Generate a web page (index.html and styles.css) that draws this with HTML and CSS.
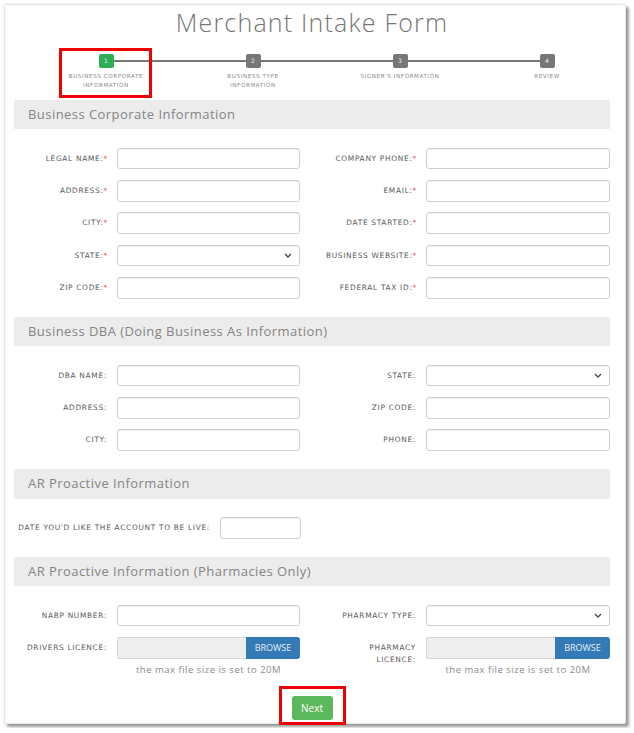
FILE: index.html
```html
<!DOCTYPE html>
<html lang="en">
<head>
<meta charset="utf-8">
<title>Merchant Intake Form</title>
<link rel="stylesheet" href="styles.css">
</head>
<body>
<div class="card">
  <h1 class="title">Merchant Intake Form</h1>

  <div class="stepper">
    <div class="step active"><span class="num">1</span><span class="step-label">BUSINESS CORPORATE<br>INFORMATION</span></div>
    <div class="step"><span class="num">2</span><span class="step-label">BUSINESS TYPE<br>INFORMATION</span></div>
    <div class="step"><span class="num">3</span><span class="step-label">SIGNER'S INFORMATION</span></div>
    <div class="step last"><span class="num">4</span><span class="step-label">REVIEW</span></div>
  </div>

  <section class="section">
    <h2 class="bar">Business Corporate Information</h2>
    <div class="grid">
      <label class="lbl">LEGAL NAME:<span class="req">*</span></label><input class="inp" type="text">
      <label class="lbl">COMPANY PHONE:<span class="req">*</span></label><input class="inp" type="text">
      <label class="lbl">ADDRESS:<span class="req">*</span></label><input class="inp" type="text">
      <label class="lbl">EMAIL:<span class="req">*</span></label><input class="inp" type="text">
      <label class="lbl">CITY:<span class="req">*</span></label><input class="inp" type="text">
      <label class="lbl">DATE STARTED:<span class="req">*</span></label><input class="inp" type="text">
      <label class="lbl">STATE:<span class="req">*</span></label>
      <div class="sel-wrap"><select class="inp sel"><option></option></select><svg class="chev" viewBox="0 0 8 5" width="8" height="5"><path d="M1 1l3 3 3-3" fill="none" stroke="#444" stroke-width="1.3"/></svg></div>
      <label class="lbl">BUSINESS WEBSITE:<span class="req">*</span></label><input class="inp" type="text">
      <label class="lbl">ZIP CODE:<span class="req">*</span></label><input class="inp" type="text">
      <label class="lbl">FEDERAL TAX ID:<span class="req">*</span></label><input class="inp" type="text">
    </div>
  </section>

  <section class="section">
    <h2 class="bar">Business DBA (Doing Business As Information)</h2>
    <div class="grid">
      <label class="lbl">DBA NAME:</label><input class="inp" type="text">
      <label class="lbl">STATE:</label>
      <div class="sel-wrap"><select class="inp sel"><option></option></select><svg class="chev" viewBox="0 0 8 5" width="8" height="5"><path d="M1 1l3 3 3-3" fill="none" stroke="#444" stroke-width="1.3"/></svg></div>
      <label class="lbl">ADDRESS:</label><input class="inp" type="text">
      <label class="lbl">ZIP CODE:</label><input class="inp" type="text">
      <label class="lbl">CITY:</label><input class="inp" type="text">
      <label class="lbl">PHONE:</label><input class="inp" type="text">
    </div>
  </section>

  <section class="section">
    <h2 class="bar">AR Proactive Information</h2>
    <div class="date-row">
      <label class="lbl">DATE YOU'D LIKE THE ACCOUNT TO BE LIVE:</label><input class="inp" type="text">
    </div>
  </section>

  <section class="section last-section">
    <h2 class="bar">AR Proactive Information (Pharmacies Only)</h2>
    <div class="grid">
      <label class="lbl">NABP NUMBER:</label><input class="inp" type="text">
      <label class="lbl">PHARMACY TYPE:</label>
      <div class="sel-wrap"><select class="inp sel"><option></option></select><svg class="chev" viewBox="0 0 8 5" width="8" height="5"><path d="M1 1l3 3 3-3" fill="none" stroke="#444" stroke-width="1.3"/></svg></div>
      <label class="lbl">DRIVERS LICENCE:</label>
      <div class="field">
        <div class="file"><span class="file-name"></span><span class="browse">BROWSE</span></div>
        <p class="help">the max file size is set to 20M</p>
      </div>
      <label class="lbl">PHARMACY<br>LICENCE:</label>
      <div class="field">
        <div class="file"><span class="file-name"></span><span class="browse">BROWSE</span></div>
        <p class="help">the max file size is set to 20M</p>
      </div>
    </div>
  </section>

  <div class="actions"><button class="next" type="button">Next</button></div>

  <div class="hl hl-step"></div>
  <div class="hl hl-next"></div>
</div>
</body>
</html>
```

FILE: styles.css
```css
* { box-sizing: border-box; }

html, body {
  margin: 0;
  background: #ffffff;
}

body {
  padding: 4px;
  font-family: "Open Sans", "Liberation Sans", sans-serif;
}

.card {
  position: relative;
  width: 622px;
  height: 720px;
  border: 1px solid #e6e6e6;
  border-radius: 2px;
  background: #fff;
  padding: 0 15px 0 9px;
  box-shadow: 0 0 3px rgba(0,0,0,0.10), 3px 3px 3px rgba(0,0,0,0.38);
}

.title {
  margin: 2px 0 17px;
  font-size: 25px;
  line-height: 30px;
  font-weight: 300;
  color: #767676;
  text-align: center;
  letter-spacing: 1.2px;
}

/* stepper */
.stepper {
  display: flex;
  width: 588px;
  margin: 0 0 10px 18.5px;
  height: 36px;
}

.step {
  position: relative;
  width: 147px;
  display: flex;
  flex-direction: column;
  align-items: center;
}

.step::after {
  content: "";
  position: absolute;
  top: 6px;
  left: 50%;
  width: 100%;
  height: 2px;
  background: #777;
}

.step.last::after { display: none; }

.num {
  position: relative;
  z-index: 1;
  width: 15px;
  height: 14px;
  border-radius: 2px;
  background: #777;
  color: #eee;
  font-family: "DejaVu Sans", sans-serif;
  font-size: 6px;
  line-height: 14px;
  text-align: center;
}

.step.active .num { background: #2fae54; }

.step-label {
  margin-top: 4px;
  font-family: "DejaVu Sans", sans-serif;
  font-size: 5.6px;
  line-height: 9px;
  letter-spacing: 0.6px;
  color: #8a8a8a;
  text-align: center;
  white-space: nowrap;
}

/* sections */
.section { margin-bottom: 18.3px; }

.bar {
  margin: 0 0 18.3px;
  height: 29.3px;
  line-height: 29.3px;
  background: #ececec;
  padding-left: 14px;
  font-size: 13px;
  font-weight: 400;
  letter-spacing: 0.45px;
  color: #858585;
}

.grid {
  display: grid;
  grid-template-columns: 103px 183px 126px 184px;
  row-gap: 10.7px;
}

.lbl {
  padding: 5px 10px 0 0;
  text-align: right;
  font-family: "DejaVu Sans", sans-serif;
  font-size: 7.4px;
  line-height: 12px;
  letter-spacing: 0.7px;
  color: #595959;
  white-space: nowrap;
}

.req { color: #e0262b; margin-right: -1px; }

.inp {
  display: block;
  width: 100%;
  height: 21.7px;
  margin: 0;
  border: 1px solid #cfcfcf;
  border-radius: 3px;
  background: #fff;
  box-shadow: inset 0 1px 1px rgba(0,0,0,0.06);
  font-size: 9px;
  padding: 0 4px;
}

.sel-wrap { position: relative; }

.sel {
  -webkit-appearance: none;
  appearance: none;
  color: #555;
}

.chev {
  position: absolute;
  right: 8px;
  top: 8.5px;
  pointer-events: none;
}

.date-row {
  display: grid;
  grid-template-columns: 206px 80.5px;
}

/* file inputs */
.field { display: flex; flex-direction: column; }

.file {
  display: flex;
  height: 21.7px;
}

.file-name {
  flex: 1;
  background: #eeeeee;
  border: 1px solid #d4d4d4;
  border-right: none;
  border-radius: 3px 0 0 3px;
}

.browse {
  width: 54px;
  background: #337ab7;
  border-radius: 0 3px 3px 0;
  color: #e8eef6;
  font-size: 9px;
  line-height: 21.7px;
  text-align: center;
}

.field:last-child .browse { width: 55px; }

.help {
  margin: 4px 0 0;
  font-size: 9.5px;
  line-height: 14px;
  letter-spacing: 0.5px;
  color: #8a8a8a;
  text-align: center;
}

.last-section { margin-bottom: 0; }

.actions {
  display: flex;
  justify-content: center;
  margin-top: 19px;
}

.next {
  width: 41px;
  height: 24px;
  border: none;
  border-radius: 3px;
  background: #5cb85c;
  color: #fff;
  font-family: "Open Sans", sans-serif;
  font-size: 10px;
  padding: 0;
}

/* annotation boxes */
.hl {
  position: absolute;
  border: 3.5px solid #f00000;
}

.hl-step {
  left: 54.3px;
  top: 43.3px;
  width: 92.4px;
  height: 49.4px;
}

.hl-next {
  left: 273.7px;
  top: 680.7px;
  width: 67px;
  height: 39.3px;
}
```
